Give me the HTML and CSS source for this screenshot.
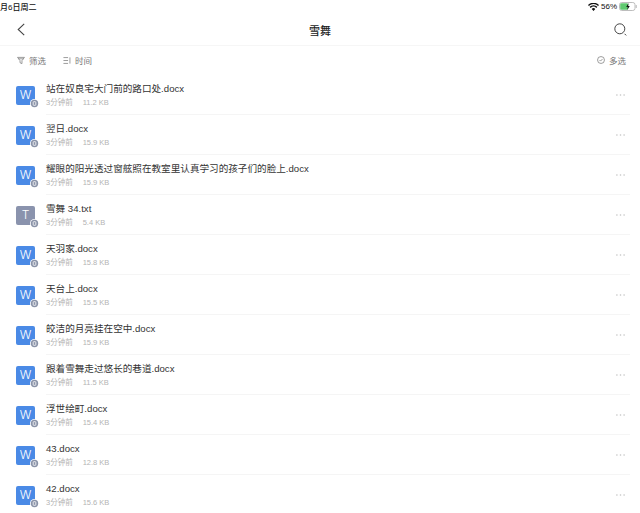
FILE: index.html
```html
<!DOCTYPE html>
<html lang="zh">
<head>
<meta charset="utf-8">
<title>雪舞</title>
<link rel="stylesheet" href="styles.css">
</head>
<body>
<svg class="defs" width="0" height="0" aria-hidden="true">
  <symbol id="badge" viewBox="0 0 9 9">
    <circle cx="4.5" cy="4.5" r="4.5" fill="#fff"/>
    <circle cx="4.5" cy="4.5" r="3.7" fill="#8a93a8"/>
    <rect x="3.2" y="2.7" width="2.6" height="3.6" rx=".6" fill="none" stroke="#fff" stroke-width=".8"/>
  </symbol>
  <symbol id="more" viewBox="0 0 10 2">
    <circle cx="1" cy="1" r=".9" fill="#c4c4c4"/>
    <circle cx="5" cy="1" r=".9" fill="#c4c4c4"/>
    <circle cx="9" cy="1" r=".9" fill="#c4c4c4"/>
  </symbol>
</svg>
<header class="status">
  <span class="date">月6日周二</span>
  <span class="sys">
    <svg class="wifi" width="11" height="8" viewBox="0 0 11 8"><path d="M5.5 8 3.7 5.9a2.6 2.6 0 0 1 3.6 0zM2.7 4.9 1.6 3.7a5.7 5.7 0 0 1 7.8 0L8.3 4.9a4.1 4.1 0 0 0-5.6 0zM.9 2.9 0 1.9a8 8 0 0 1 11 0l-.9 1a6.7 6.7 0 0 0-9.2 0z" fill="#111"/></svg>
    <span class="pct">56%</span>
    <svg class="batt" width="18" height="9" viewBox="0 0 18 9"><rect x=".5" y=".5" width="15.5" height="8" rx="2.2" fill="#fff" stroke="#bdbdbd"/><rect x="1.2" y="1.2" width="8" height="6.6" rx="1.4" fill="#5fc96f"/><rect x="16.6" y="3" width="1.2" height="3" rx=".5" fill="#bdbdbd"/><path d="M9.6 1 7.2 5h1.6l-.6 3 2.6-4H9.1z" fill="#111"/></svg>
  </span>
</header>
<nav class="nav">
  <svg class="back" width="8" height="13" viewBox="0 0 8 13"><path d="M7.2.8 1.2 6.5l6 5.7" fill="none" stroke="#444" stroke-width="1.1"/></svg>
  <h1 class="title">雪舞</h1>
  <svg class="search" width="13" height="13" viewBox="0 0 13 13"><circle cx="5.8" cy="5.8" r="5" fill="none" stroke="#444" stroke-width="1"/><path d="m10.6 10.8 1.6 1.6" stroke="#444" stroke-width="1"/></svg>
</nav>
<section class="tools">
  <div class="tool">
    <svg width="8" height="9" viewBox="0 0 9 9"><path d="M.6 1h7.8L5.6 4.6V8L3.4 7V4.6zM1.6 2.6h5.8" fill="none" stroke="#777" stroke-width=".8"/></svg>
    <span>筛选</span>
  </div>
  <div class="tool tool-sort">
    <svg width="8" height="9" viewBox="0 0 9 9"><path d="M.5 1.2h5.2M.5 4.5h5.2M.5 7.8h5.2M7.8 1v7" fill="none" stroke="#777" stroke-width=".8"/></svg>
    <span>时间</span>
  </div>
  <div class="tool tool-multi">
    <svg width="8" height="8" viewBox="0 0 9 9"><circle cx="4.5" cy="4.5" r="3.9" fill="none" stroke="#777" stroke-width=".8"/><path d="m2.8 4.5 1.2 1.2 2.2-2.3" fill="none" stroke="#777" stroke-width=".8"/></svg>
    <span>多选</span>
  </div>
</section>
<main class="list">
  <article class="row"><div class="icon word">W<svg class="badge"><use href="#badge"/></svg></div><div class="info"><div class="name">站在奴良宅大门前的路口处.docx</div><div class="meta"><span>3分钟前</span><span>11.2 KB</span></div></div><svg class="more"><use href="#more"/></svg></article>
  <article class="row"><div class="icon word">W<svg class="badge"><use href="#badge"/></svg></div><div class="info"><div class="name">翌日.docx</div><div class="meta"><span>3分钟前</span><span>15.9 KB</span></div></div><svg class="more"><use href="#more"/></svg></article>
  <article class="row"><div class="icon word">W<svg class="badge"><use href="#badge"/></svg></div><div class="info"><div class="name">耀眼的阳光透过窗舷照在教室里认真学习的孩子们的脸上.docx</div><div class="meta"><span>3分钟前</span><span>15.9 KB</span></div></div><svg class="more"><use href="#more"/></svg></article>
  <article class="row"><div class="icon text">T<svg class="badge"><use href="#badge"/></svg></div><div class="info"><div class="name">雪舞 34.txt</div><div class="meta"><span>3分钟前</span><span>5.4 KB</span></div></div><svg class="more"><use href="#more"/></svg></article>
  <article class="row"><div class="icon word">W<svg class="badge"><use href="#badge"/></svg></div><div class="info"><div class="name">天羽家.docx</div><div class="meta"><span>3分钟前</span><span>15.8 KB</span></div></div><svg class="more"><use href="#more"/></svg></article>
  <article class="row"><div class="icon word">W<svg class="badge"><use href="#badge"/></svg></div><div class="info"><div class="name">天台上.docx</div><div class="meta"><span>3分钟前</span><span>15.5 KB</span></div></div><svg class="more"><use href="#more"/></svg></article>
  <article class="row"><div class="icon word">W<svg class="badge"><use href="#badge"/></svg></div><div class="info"><div class="name">皎洁的月亮挂在空中.docx</div><div class="meta"><span>3分钟前</span><span>15.9 KB</span></div></div><svg class="more"><use href="#more"/></svg></article>
  <article class="row"><div class="icon word">W<svg class="badge"><use href="#badge"/></svg></div><div class="info"><div class="name">跟着雪舞走过悠长的巷道.docx</div><div class="meta"><span>3分钟前</span><span>11.5 KB</span></div></div><svg class="more"><use href="#more"/></svg></article>
  <article class="row"><div class="icon word">W<svg class="badge"><use href="#badge"/></svg></div><div class="info"><div class="name">浮世绘町.docx</div><div class="meta"><span>3分钟前</span><span>15.4 KB</span></div></div><svg class="more"><use href="#more"/></svg></article>
  <article class="row"><div class="icon word">W<svg class="badge"><use href="#badge"/></svg></div><div class="info"><div class="name">43.docx</div><div class="meta"><span>3分钟前</span><span>12.8 KB</span></div></div><svg class="more"><use href="#more"/></svg></article>
  <article class="row"><div class="icon word">W<svg class="badge"><use href="#badge"/></svg></div><div class="info"><div class="name">42.docx</div><div class="meta"><span>3分钟前</span><span>15.6 KB</span></div></div><svg class="more"><use href="#more"/></svg></article>
</main>
</body>
</html>
```

FILE: styles.css
```css
* { box-sizing: border-box; margin: 0; padding: 0; }
html, body { height: 513px; overflow: hidden; }
body {
  background: #fff;
  color: #333;
  font-family: "Liberation Sans", "Noto Sans CJK SC", sans-serif;
}
.defs { position: absolute; }
.status {
  height: 13px;
  display: flex;
  align-items: center;
  justify-content: space-between;
  padding-right: 3px;
  font-size: 8px;
  color: #111;
}
.date { font-weight: 500; }
.sys { display: flex; align-items: center; gap: 2px; }
.nav {
  height: 33px;
  display: flex;
  align-items: center;
  justify-content: space-between;
  padding: 1px 13px 0 17px;
  border-bottom: 1px solid #f6f6f6;
  position: relative;
}
.title { font-size: 11px; font-weight: 500; color: #222; position: absolute; left: 0; right: 0; text-align: center; }
.tools {
  height: 28px;
  display: flex;
  align-items: center;
  padding: 0 14px 0 17px;
  font-size: 8.5px;
  color: #777;
}
.tool { display: flex; align-items: center; gap: 4px; }
.tool-sort { margin-left: 17px; }
.tool-multi { margin-left: auto; }
.list { padding: 1px 10px 0 16px; }
.row {
  position: relative;
  height: 40px;
  display: flex;
  align-items: center;
}
.icon {
  position: relative;
  flex: none;
  width: 19px;
  height: 19px;
  border-radius: 2px;
  display: flex;
  align-items: center;
  justify-content: center;
  color: #fff;
  font-family: "Inter", sans-serif;
  font-weight: 300;
  font-size: 12px;
  line-height: 1;
}
.word { background: #4a8ae6; }
.text { background: #8a93ad; }
.badge { position: absolute; right: -4px; bottom: -3px; width: 9px; height: 9px; }
.info {
  flex: 1;
  height: 40px;
  margin-left: 11px;
  padding-top: 7px;
  border-bottom: 1px solid #f5f5f5;
  min-width: 0;
}
.name { font-size: 9.6px; line-height: 14px; color: #333; }
.meta { display: flex; gap: 10px; font-size: 7.5px; line-height: 13px; color: #b4b4b4; }
.more { flex: none; width: 9px; height: 2px; position: absolute; right: 5px; top: 19px; }
```
